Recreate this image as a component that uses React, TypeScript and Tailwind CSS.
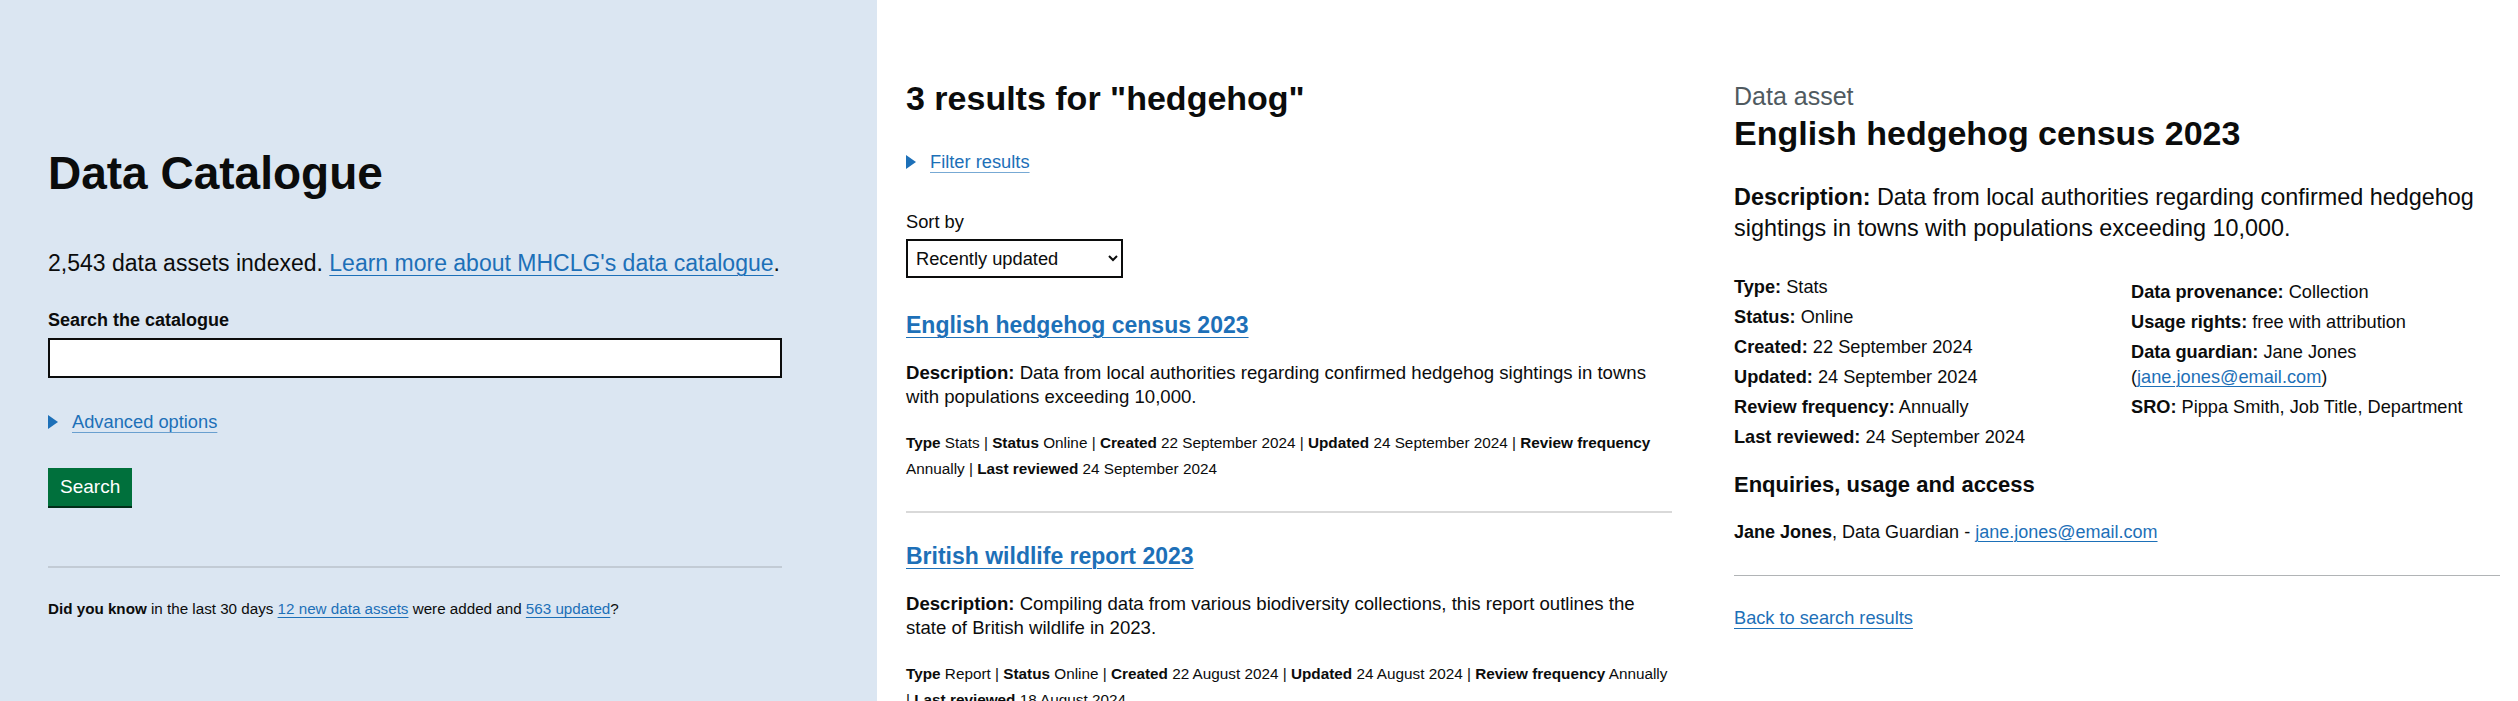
import React from "react";

const font = { fontFamily: '"Liberation Sans", Arial, sans-serif' };

const Triangle = () => (
  <svg width="10" height="14" viewBox="0 0 10 14" className="shrink-0">
    <path d="M0 0 L10 7 L0 14 Z" fill="#1d70b8" />
  </svg>
);

const Disclosure = ({ label }: { label: string }) => (
  <div className="flex items-center gap-[14px] text-[18.3px] leading-[25px]">
    <Triangle />
    <a href="#" className="text-[#1d70b8] underline decoration-1 underline-offset-[4px] decoration-[#1d70b8]/60">
      {label}
    </a>
  </div>
);

type Meta = [string, string][];

const Result = ({ title, desc, meta }: { title: string; desc: string; meta: Meta }) => (
  <div>
    <a href="#" className="block w-fit text-[23px] leading-[30px] font-bold text-[#1d70b8] underline decoration-1 underline-offset-[4px]">
      {title}
    </a>
    <p className="mt-[21px] text-[18.6px] leading-[24px] text-[#0b0c0c]">
      <b>Description:</b> {desc}
    </p>
    <p className="mt-[21px] text-[15.3px] leading-[26px] text-[#0b0c0c]">
      {meta.map(([k, v], i) => (
        <span key={k}>
          {i > 0 && " | "}
          <b>{k}</b> {v}
        </span>
      ))}
    </p>
  </div>
);

const Field = ({ k, children }: { k: string; children: React.ReactNode }) => (
  <p className="mb-[5px] text-[18.2px] leading-[25px]">
    <b>{k}:</b> {children}
  </p>
);

export default function App() {
  return (
    <div style={font} className="flex w-[2518px] h-[701px] overflow-hidden bg-white text-[#0b0c0c]">
      {/* search panel */}
      <div className="w-[877px] shrink-0 bg-[#dbe6f2] pl-[48px] pt-[148px]">
        <div className="w-[734px]">
          <h1 className="text-[46px] leading-[50px] font-bold">Data Catalogue</h1>
          <p className="mt-[50px] text-[23px] leading-[30px]">
            2,543 data assets indexed.{" "}
            <a href="#" className="text-[#1d70b8] underline decoration-1 underline-offset-[4px]">
              Learn more about MHCLG's data catalogue
            </a>
            .
          </p>
          <label className="block mt-[30px] text-[18px] leading-[25px] font-bold">Search the catalogue</label>
          <input type="text" className="block mt-[5px] w-[734px] h-[40px] border-2 border-[#0b0c0c] bg-white px-2" />
          <div className="mt-[31px]">
            <Disclosure label="Advanced options" />
          </div>
          <button
            type="button"
            className="mt-[34px] h-[38px] px-[12px] bg-[#00703c] text-white text-[19px] shadow-[0_2px_0_#002d18]"
          >
            Search
          </button>
          <div className="mt-[60px] h-[2px] bg-[#c2cbd5]" />
          <p className="mt-[31px] text-[15.2px] leading-[20px]">
            <b>Did you know</b> in the last 30 days{" "}
            <a href="#" className="text-[#1d70b8] underline decoration-1 underline-offset-[3px]">12 new data assets</a> were added and{" "}
            <a href="#" className="text-[#1d70b8] underline decoration-1 underline-offset-[3px]">563 updated</a>?
          </p>
        </div>
      </div>

      {/* results */}
      <div className="w-[766px] shrink-0 ml-[29px] pt-[78px]">
        <h1 className="text-[34px] leading-[40px] font-bold">3 results for "hedgehog"</h1>
        <div className="mt-[31px]">
          <Disclosure label="Filter results" />
        </div>
        <label className="block mt-[35px] text-[18.3px] leading-[25px]">Sort by</label>
        <select className="block mt-[5px] w-[217px] h-[39px] border-2 border-[#0b0c0c] bg-white pl-[4px] text-[18.3px] text-[#0b0c0c]">
          <option>Recently updated</option>
          <option>Title</option>
        </select>
        <div className="mt-[32px]">
          <Result
            title="English hedgehog census 2023"
            desc="Data from local authorities regarding confirmed hedgehog sightings in towns with populations exceeding 10,000."
            meta={[
              ["Type", "Stats"],
              ["Status", "Online"],
              ["Created", "22 September 2024"],
              ["Updated", "24 September 2024"],
              ["Review frequency", "Annually"],
              ["Last reviewed", "24 September 2024"],
            ]}
          />
        </div>
        <div className="mt-[29px] h-[2px] bg-[#d9d9d9]" />
        <div className="mt-[28px]">
          <Result
            title="British wildlife report 2023"
            desc="Compiling data from various biodiversity collections, this report outlines the state of British wildlife in 2023."
            meta={[
              ["Type", "Report"],
              ["Status", "Online"],
              ["Created", "22 August 2024"],
              ["Updated", "24 August 2024"],
              ["Review frequency", "Annually"],
              ["Last reviewed", "18 August 2024"],
            ]}
          />
        </div>
      </div>

      {/* detail */}
      <div className="w-[766px] shrink-0 ml-[62px] pt-[81px]">
        <p className="text-[25px] leading-[30px] text-[#505a5f]">Data asset</p>
        <h2 className="mt-[2px] text-[34px] leading-[40px] font-bold">English hedgehog census 2023</h2>
        <p className="mt-[29px] text-[23.4px] leading-[31px]">
          <b>Description:</b> Data from local authorities regarding confirmed hedgehog sightings in towns with populations exceeding 10,000.
        </p>
        <div className="mt-[31px] grid grid-cols-[397px_1fr]">
          <div>
            <Field k="Type">Stats</Field>
            <Field k="Status">Online</Field>
            <Field k="Created">22 September 2024</Field>
            <Field k="Updated">24 September 2024</Field>
            <Field k="Review frequency">Annually</Field>
            <Field k="Last reviewed">24 September 2024</Field>
          </div>
          <div className="pt-[5px]">
            <Field k="Data provenance">Collection</Field>
            <Field k="Usage rights">free with attribution</Field>
            <Field k="Data guardian">
              Jane Jones
              <br />(
              <a href="#" className="text-[#1d70b8] underline decoration-1 underline-offset-[3px]">jane.jones@email.com</a>)
            </Field>
            <Field k="SRO">Pippa Smith, Job Title, Department</Field>
          </div>
        </div>
        <h3 className="mt-[15px] text-[22px] leading-[30px] font-bold">Enquiries, usage and access</h3>
        <p className="mt-[20px] text-[18px] leading-[25px]">
          <b>Jane Jones</b>, Data Guardian -{" "}
          <a href="#" className="text-[#1d70b8] underline decoration-1 underline-offset-[3px]">jane.jones@email.com</a>
        </p>
        <div className="mt-[30px] h-px bg-[#b1b4b6]" />
        <a href="#" className="block w-fit mt-[30px] text-[18.2px] leading-[25px] text-[#1d70b8] underline decoration-1 underline-offset-[4px]">
          Back to search results
        </a>
      </div>
    </div>
  );
}
